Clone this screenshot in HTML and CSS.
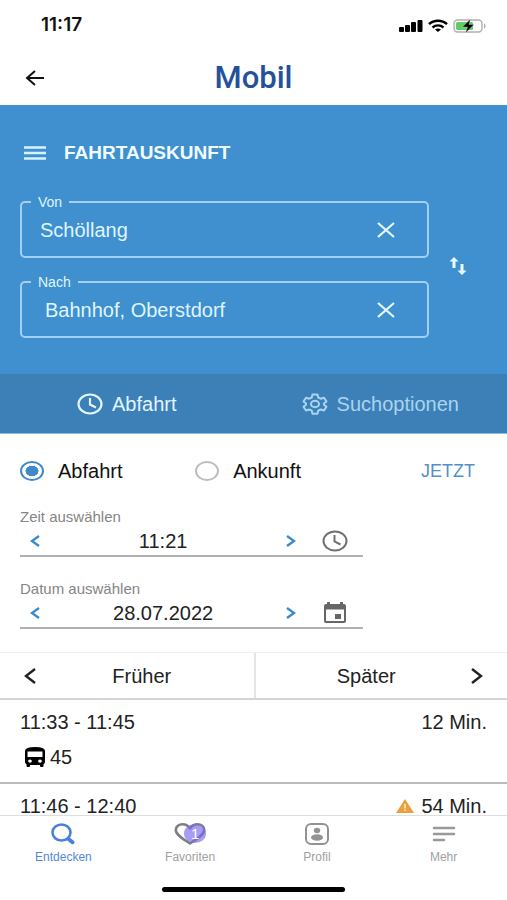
FILE: index.html
```html
<!DOCTYPE html>
<html lang="de">
<head>
<meta charset="utf-8">
<meta name="viewport" content="width=device-width, initial-scale=1">
<title>Mobil</title>
<link rel="stylesheet" href="styles.css">
</head>
<body>
<div class="status">
  <span class="clock">11:17</span>
  <svg class="status-icons" width="88" height="16" viewBox="0 0 88 16" aria-hidden="true">
    <rect x="0" y="10" width="5" height="5" rx="1"/>
    <rect x="6" y="8" width="5" height="7" rx="1"/>
    <rect x="12" y="5" width="5" height="10" rx="1"/>
    <rect x="18.500" y="3" width="5" height="12" rx="1"/>
    <g fill="none" stroke="#000" stroke-width="2.400">
      <path d="M30 7.200c5-4.600 13-4.600 18 0"/>
      <path d="M33.500 10.500c3.200-2.800 7.800-2.800 11 0"/>
    </g>
    <path d="M36 12.500c2-1.500 4-1.500 6 0l-3 2.500z"/>
    <rect x="55" y="3" width="28" height="12" rx="3.500" fill="#fff" stroke="#b0b0b0" stroke-width="1.400"/>
    <rect x="57" y="5" width="17" height="8" rx="1.500" fill="#63cb68"/>
    <path d="M85 6.500c2 .5 2 4.500 0 5z" fill="#aaa"/>
    <path d="M71.500 2l-8 8h5l-2 6 8.500-8.500h-5z" stroke="#fff" stroke-width=".3"/>
  </svg>
</div>
<header class="header">
  <button class="icon-button" aria-label="Zurück">
    <svg width="20" height="18" viewBox="0 0 20 18" fill="none" stroke="#111" stroke-width="2"><path d="M19 9H2M10 2L2 9l8 7"/></svg>
  </button>
  <h1>Mobil</h1>
</header>

<main>
  <section class="search">
    <div class="search-title">
      <button class="icon-button" aria-label="Menü">
        <svg width="24" height="14" viewBox="0 0 24 14" stroke="#d5f3ff" stroke-width="2.400"><path d="M1 1.500h22M1 7h22M1 12.500h22"/></svg>
      </button>
      <h2>FAHRTAUSKUNFT</h2>
    </div>
    <div class="route">
      <div class="stops">
        <fieldset class="stop">
          <legend><label for="from">Von</label></legend>
          <input id="from" type="text" value="Schöllang">
          <button class="icon-button" aria-label="Von löschen">
            <svg width="18" height="16" viewBox="0 0 18 16" stroke="#e6faff" stroke-width="2.200"><path d="M1 1l16 14M17 1L1 15"/></svg>
          </button>
        </fieldset>
        <fieldset class="stop destination">
          <legend><label for="to">Nach</label></legend>
          <input id="to" type="text" value="Bahnhof, Oberstdorf">
          <button class="icon-button" aria-label="Nach löschen">
            <svg width="18" height="16" viewBox="0 0 18 16" stroke="#e6faff" stroke-width="2.200"><path d="M1 1l16 14M17 1L1 15"/></svg>
          </button>
        </fieldset>
      </div>
      <button class="icon-button" aria-label="Start und Ziel tauschen">
        <svg width="18" height="20" viewBox="0 0 18 20"><path fill="#e6faff" d="M5 1L.5 5.500h3V12h3V5.500h3zM13 19l4.500-4.500h-3V8h-3v6.500h-3z"/></svg>
      </button>
    </div>
  </section>

  <div class="tabs">
    <button class="tab active">
      <svg width="26" height="22" viewBox="0 0 26 22" fill="none" stroke="currentColor" stroke-width="2.200"><ellipse cx="13" cy="11" rx="11.500" ry="9.500"/><path d="M13 5v6.500l6 3"/></svg>
      Abfahrt
    </button>
    <button class="tab">
      <svg width="26" height="22" viewBox="0 0 26 22" fill="none" stroke="currentColor" stroke-width="2" stroke-linejoin="round"><path d="M10.500 1.500h5l.7 3 2.500 1.200 3.300-1L24.500 8.500 22 10.500v1.200l2.500 2-2.500 3.800-3.300-1-2.500 1.200-.7 3h-5l-.7-3-2.500-1.200-3.300 1-2.500-3.800 2.500-2v-1.200l-2.500-2L4 4.700l3.300 1 2.500-1.200z"/><ellipse cx="13" cy="11" rx="4" ry="3.200"/></svg>
      Suchoptionen
    </button>
  </div>

  <section class="when">
    <div class="mode">
      <label><input type="radio" name="mode" checked>Abfahrt</label>
      <label><input type="radio" name="mode">Ankunft</label>
      <button class="now">JETZT</button>
    </div>
    <div class="picker">
      <label for="time">Zeit auswählen</label>
      <div class="picker-row">
        <button class="step" aria-label="Frühere Zeit"><svg width="10" height="12" viewBox="0 0 10 12"><path d="M9 1L2 6l7 5"/></svg></button>
        <input id="time" type="text" value="11:21">
        <button class="step" aria-label="Spätere Zeit"><svg width="10" height="12" viewBox="0 0 10 12"><path d="M1 1l7 5-7 5"/></svg></button>
        <button class="open" aria-label="Uhr öffnen"><svg width="26" height="22" viewBox="0 0 26 22" fill="none" stroke="#707070" stroke-width="2"><ellipse cx="13" cy="11" rx="11.500" ry="9.500"/><path d="M12.500 5v6.500l6 3"/></svg></button>
      </div>
    </div>
    <div class="picker">
      <label for="date">Datum auswählen</label>
      <div class="picker-row">
        <button class="step" aria-label="Vorheriger Tag"><svg width="10" height="12" viewBox="0 0 10 12"><path d="M9 1L2 6l7 5"/></svg></button>
        <input id="date" type="text" value="28.07.2022">
        <button class="step" aria-label="Nächster Tag"><svg width="10" height="12" viewBox="0 0 10 12"><path d="M1 1l7 5-7 5"/></svg></button>
        <button class="open" aria-label="Kalender öffnen"><svg width="26" height="22" viewBox="0 0 26 22"><path fill="#666" fill-rule="evenodd" d="M5 0h3v2h10V0h3v2h1q2 0 2 2v15q0 2-2 2H4q-2 0-2-2V4q0-2 2-2h1zM4 7.500v11.500h18V7.500zM13 12h6v5h-6z"/></svg></button>
      </div>
    </div>
  </section>

  <div class="paging">
    <button class="earlier"><svg width="12" height="16" viewBox="0 0 12 16"><path d="M11 1L2 8l9 7"/></svg><span>Früher</span></button>
    <button class="later"><span>Später</span><svg width="12" height="16" viewBox="0 0 12 16"><path d="M1 1l9 7-9 7"/></svg></button>
  </div>

  <ul class="trips">
    <li>
      <div class="trip"><span>11:33 - 11:45</span><span>12 Min.</span></div>
      <div class="line">
        <svg width="22" height="20" viewBox="0 0 22 20"><path fill-rule="evenodd" d="M1 4q0-4 10-4t10 4v11q0 1.500-1.500 2.200V19q0 1-1 1h-1.500q-1 0-1-1v-1H6v1q0 1-1 1H3.500q-1 0-1-1v-1.800Q1 16.500 1 15zM3.500 4.500V10h15V4.500zM6 12.500a1.800 1.600 0 1 0 .01 0zM16 12.500a1.800 1.600 0 1 0 .01 0z"/></svg>
        45
      </div>
    </li>
    <li>
      <div class="trip"><span>11:46 - 12:40</span><span class="delay"><svg width="18" height="14" viewBox="0 0 18 14"><path fill="#eba03f" d="M9 0l9 14H0z"/><path stroke="#fff0c8" stroke-width="1.500" d="M9 5v4.500M9 10.500V12"/></svg>54 Min.</span></div>
    </li>
  </ul>
</main>

<nav class="bottom">
  <a href="#entdecken" class="current">
    <svg width="26" height="22" viewBox="0 0 26 22" fill="none" stroke="#4a80dc"><ellipse cx="11.500" cy="9.500" rx="9" ry="8" stroke-width="2.600"/><path d="M18.500 16l4 3.200" stroke-width="4" stroke-linecap="round"/></svg>
    Entdecken
  </a>
  <a href="#favoriten">
    <span class="badged">
      <svg width="32" height="22" viewBox="0 0 32 22" fill="none" stroke="#7d7d85" stroke-width="2.600" stroke-linejoin="round"><path d="M16 20.500C8 15.500 1.800 11.500 1.800 7 1.800 3.500 5 1.300 8.500 1.300c3.300 0 6 1.700 7.500 4.200 1.500-2.500 4.200-4.200 7.500-4.200 3.500 0 6.700 2.200 6.700 5.700 0 4.500-6.200 8.500-14.200 13.500z"/></svg>
      <span class="badge">1</span>
    </span>
    Favoriten
  </a>
  <a href="#profil">
    <svg width="26" height="22" viewBox="0 0 26 22" fill="#929292"><rect x="2" y="1" width="22" height="20" rx="5" fill="none" stroke="#929292" stroke-width="2"/><ellipse cx="13" cy="7.500" rx="3.200" ry="2.700"/><ellipse cx="13" cy="14.500" rx="6" ry="3.200"/></svg>
    Profil
  </a>
  <a href="#mehr">
    <svg width="26" height="22" viewBox="0 0 26 22" stroke="#999" stroke-width="2.500" stroke-linecap="round"><path d="M3 5h20M3 11h20M3 17h10"/></svg>
    Mehr
  </a>
</nav>
<div class="home"></div>
</body>
</html>
```
FILE: styles.css
```css
* {
  box-sizing: border-box;
}

body {
  margin: 0;
  height: 100vh;
  display: flex;
  flex-direction: column;
  background: #fff;
  color: #222;
  font-family: "Liberation Sans", Arial, sans-serif;
  font-size: 20px;
  line-height: 24px;
}

button,
input {
  margin: 0;
  padding: 0;
  border: 0;
  background: none;
  color: inherit;
  font: inherit;
}

svg {
  display: block;
  flex: none;
}

.status {
  flex: none;
  display: flex;
  align-items: center;
  justify-content: space-between;
  height: 50px;
  padding: 0 20px 0 41px;
}

.clock {
  color: #111;
  font: 600 19px/20px Inter, sans-serif;
}

.header {
  flex: none;
  display: grid;
  grid-template-columns: 1fr auto 1fr;
  align-items: center;
  height: 55px;
  padding: 0 25px;
}

.icon-button {
  justify-self: start;
}

h1 {
  margin: 0;
  color: #24529a;
  font: 500 31px/40px Roboto, sans-serif;
}

main {
  flex: 1;
  min-height: 0;
  overflow: hidden;
}

.search {
  padding: 36px 20px;
  background: #4090cf;
  color: #dff5ff;
}

.search-title {
  display: flex;
  align-items: center;
  gap: 17px;
  padding-left: 3px;
}

h2 {
  margin: 0;
  color: #f0fcff;
  font-size: 19px;
  line-height: 24px;
}

.route {
  display: grid;
  grid-template-columns: 1fr auto;
  align-items: center;
  gap: 20px;
  padding: 29px 20px 0 0;
}

.stops {
  display: grid;
  gap: 16px;
}

.stop {
  display: flex;
  align-items: center;
  min-width: 0;
  height: 64px;
  margin: 0;
  padding: 0 32px 6px 18px;
  border: 2px solid #a0d0f4;
  border-radius: 5px;
}

.stop legend {
  margin-left: -9px;
  padding: 0 7px;
  font-size: 14px;
  line-height: 16px;
}

.stop input {
  flex: 1;
  min-width: 0;
}

.destination {
  padding-left: 23px;
}

.destination legend {
  margin-left: -14px;
}

.tabs {
  display: grid;
  grid-template-columns: 1fr 1fr;
  height: 60px;
  background: #3d80b8;
  border-bottom: 1px solid #85bfe6;
}

.tab {
  display: flex;
  align-items: center;
  justify-content: center;
  gap: 9px;
  color: #a9d4ef;
}

.tab.active {
  color: #e0f6ff;
}

.when {
  padding: 25px 20px 23px;
}

.mode {
  display: grid;
  grid-template-columns: 3fr 3fr 2fr;
  align-items: center;
  margin-bottom: 24px;
  color: #111;
}

.mode label {
  display: flex;
  align-items: center;
  gap: 14px;
}

.mode input {
  appearance: none;
  width: 24px;
  height: 20px;
  border: 2px solid #bdbdbd;
  border-radius: 50%;
}

.mode input:checked {
  border-color: #4088c8;
  background: radial-gradient(closest-side, #4088c8 62%, #fff 68%);
}

.now {
  justify-self: end;
  margin-right: 12px;
  color: #5191c8;
  font-size: 18px;
}

.picker {
  width: 73.500%;
  border-bottom: 2px solid #b0b0b0;
}

.picker + .picker {
  margin-top: 22px;
}

.picker > label {
  display: block;
  color: #858585;
  font-size: 15px;
  line-height: 20px;
}

.picker-row {
  display: flex;
  align-items: center;
  height: 28px;
  padding: 0 15px 0 10px;
}

.picker input {
  flex: 1;
  min-width: 0;
  text-align: center;
}

.step path {
  fill: none;
  stroke: #398bcb;
  stroke-width: 2.4;
}

.open {
  margin-left: 26px;
}

.paging {
  display: grid;
  grid-template-columns: 1fr 1fr;
  height: 48px;
  border-top: 1px solid #f0f0f0;
  border-bottom: 2px solid #d5d5d5;
}

.paging button {
  display: flex;
  align-items: center;
}

.paging .earlier {
  padding: 0 6px 0 24px;
}

.paging .later {
  padding: 0 24px 0 6px;
  border-left: 2px solid #e5e5e5;
}

.paging span {
  flex: 1;
}

.paging path {
  fill: none;
  stroke: #222;
  stroke-width: 2.4;
}

.trips {
  margin: 0;
  padding: 0;
  list-style: none;
}

.trips li {
  padding: 12px 20px 13px;
  border-bottom: 2px solid #bcbcbc;
}

.trip {
  display: flex;
  justify-content: space-between;
  line-height: 20px;
}

.delay {
  display: flex;
  align-items: center;
  gap: 7px;
}

.line {
  display: flex;
  align-items: center;
  gap: 4px;
  margin-top: 13px;
  padding-left: 4px;
  line-height: 24px;
}

.bottom {
  flex: none;
  display: grid;
  grid-template-columns: repeat(4, 1fr);
  border-top: 1px solid #ddd;
  padding-top: 7px;
}

.bottom a {
  display: flex;
  flex-direction: column;
  align-items: center;
  gap: 4px;
  color: #a0a0a0;
  font-size: 12px;
  line-height: 16px;
  text-decoration: none;
}

.bottom .current {
  color: #5486d8;
}

.badged {
  position: relative;
}

.badge {
  position: absolute;
  top: 1px;
  right: 0;
  width: 22px;
  height: 19px;
  border-radius: 50%;
  background: rgba(120, 104, 235, 0.65);
  color: #fff;
  font-size: 15px;
  line-height: 19px;
  text-align: center;
}

.home {
  flex: none;
  width: 36%;
  height: 5px;
  margin: 22px auto 8px;
  border-radius: 3px;
  background: #000;
}
```
